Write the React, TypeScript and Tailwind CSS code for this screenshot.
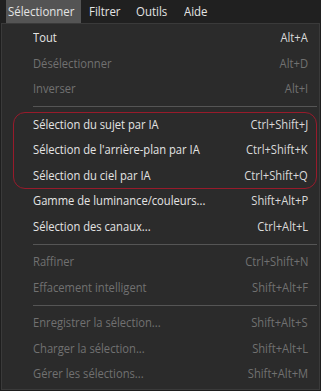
import React from "react";

type Item = { label: string; shortcut: string; enabled: boolean };

const group1: Item[] = [
  { label: "Tout", shortcut: "Alt+A", enabled: true },
  { label: "Désélectionner", shortcut: "Alt+D", enabled: false },
  { label: "Inverser", shortcut: "Alt+I", enabled: false },
];
const groupAI: Item[] = [
  { label: "Sélection du sujet par IA", shortcut: "Ctrl+Shift+J", enabled: true },
  { label: "Sélection de l'arrière-plan par IA", shortcut: "Ctrl+Shift+K", enabled: true },
  { label: "Sélection du ciel par IA", shortcut: "Ctrl+Shift+Q", enabled: true },
];
const group2: Item[] = [
  { label: "Gamme de luminance/couleurs...", shortcut: "Shift+Alt+P", enabled: true },
  { label: "Sélection des canaux...", shortcut: "Ctrl+Alt+L", enabled: true },
];
const group3: Item[] = [
  { label: "Raffiner", shortcut: "Ctrl+Shift+N", enabled: false },
  { label: "Effacement intelligent", shortcut: "Shift+Alt+F", enabled: false },
];
const group4: Item[] = [
  { label: "Enregistrer la sélection...", shortcut: "Shift+Alt+S", enabled: false },
  { label: "Charger la sélection...", shortcut: "Shift+Alt+L", enabled: false },
  { label: "Gérer les sélections...", shortcut: "Shift+Alt+M", enabled: false },
];

function Row({ item }: { item: Item }) {
  return (
    <div
      className={
        "flex h-[25.5px] items-center justify-between pl-[31px] pr-[11px] " +
        (item.enabled ? "text-[#e4e4e4]" : "text-[#717171]")
      }
    >
      <span className="inline-block origin-left scale-x-[0.86] whitespace-nowrap">{item.label}</span>
      <span
        className={
          "inline-block origin-right scale-x-[0.86] whitespace-nowrap " +
          (item.enabled ? "text-[#dadada]" : "text-[#717171]")
        }
      >
        {item.shortcut}
      </span>
    </div>
  );
}

function Sep() {
  return (
    <div className="flex h-[10px] items-center pl-[31px] pr-[2px]">
      <div className="h-px w-full bg-[#555555]" />
    </div>
  );
}

export default function App() {
  return (
    <div
      className="h-[391px] w-[321px] overflow-hidden bg-[#1e1e1e] text-[13px] leading-none"
      style={{ fontFamily: '"Open Sans", "Noto Sans", sans-serif' }}
    >
      <div className="flex h-[23px] items-stretch bg-[#202020] text-[#e4e4e4]">
        <div className="ml-[6px] flex w-[75px] items-center bg-[#545454] pl-[2px]">
          <span className="inline-block origin-left scale-x-[0.88] whitespace-nowrap">Sélectionner</span>
        </div>
        <div className="flex w-[47px] items-center pl-[8px]">
          <span className="inline-block origin-left scale-x-[0.88] whitespace-nowrap">Filtrer</span>
        </div>
        <div className="flex w-[48px] items-center pl-[8px]">
          <span className="inline-block origin-left scale-x-[0.88] whitespace-nowrap">Outils</span>
        </div>
        <div className="flex items-center pl-[8px]">
          <span className="inline-block origin-left scale-x-[0.88] whitespace-nowrap">Aide</span>
        </div>
      </div>
      <div className="ml-[1px] h-[367px] w-[319px] border border-[#3a3a3a] bg-[#2b2b2b] pt-[1px]">
        {group1.map((i) => (
          <Row key={i.label} item={i} />
        ))}
        <Sep />
        <div className="relative">
          {groupAI.map((i) => (
            <Row key={i.label} item={i} />
          ))}
          <div className="pointer-events-none absolute top-0 bottom-[-1px] left-[11px] right-[2px] rounded-[12px] border-[1.5px] border-[#981b2b]" />
        </div>
        {group2.map((i) => (
          <Row key={i.label} item={i} />
        ))}
        <Sep />
        {group3.map((i) => (
          <Row key={i.label} item={i} />
        ))}
        <Sep />
        {group4.map((i) => (
          <Row key={i.label} item={i} />
        ))}
      </div>
    </div>
  );
}
